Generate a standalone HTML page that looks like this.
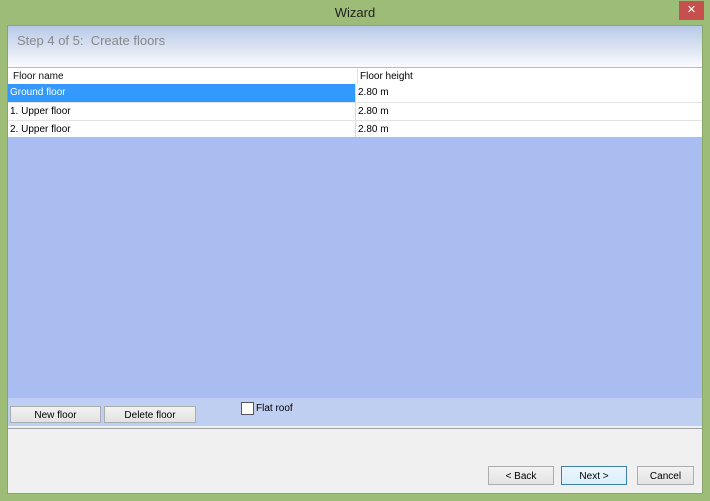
<!DOCTYPE html><html><head><style>
body{margin:0;width:710px;height:501px;background:#9dbc78;font-family:"Liberation Sans",sans-serif;position:relative;overflow:hidden}
.a{position:absolute}
.btn{position:absolute;background:linear-gradient(#f2f2f2,#e3e3e3);border:1px solid #adadad;font-size:10px;text-align:center;box-sizing:border-box;color:#000}
.cell{position:absolute;font-size:10px;line-height:17px;padding-left:2px;box-sizing:border-box}
</style></head><body>
<div class="a" style="left:0;top:0;width:710px;height:25px;text-align:center;font-size:13px;line-height:25px;color:#222">Wizard</div>
<div class="a" style="left:679px;top:1px;width:25px;height:19px;background:#c7504f;color:#fff;text-align:center;font-size:11px;line-height:19px">✕</div>
<div class="a" style="left:7px;top:25px;width:696px;height:469px;background:#f0f0f0;border:1px solid #86a86a;box-sizing:border-box"></div>
<div class="a" style="left:8px;top:26px;width:694px;height:41px;background:linear-gradient(#b8c9e6,#fafbfd);"></div>
<div class="a" style="left:17px;top:33px;font-size:13px;color:#888">Step 4 of 5:&nbsp; Create floors</div>
<div class="a" style="left:8px;top:67px;width:694px;height:70px;background:#fff;border-top:1px solid #bbb"></div>
<div class="cell" style="left:10px;top:68px;width:345px;height:16px;color:#111;padding-left:3px">Floor name</div>
<div class="cell" style="left:357px;top:68px;width:345px;height:16px;border-left:1px solid #e5e5e5">Floor height</div>
<div class="cell" style="left:8px;top:84px;width:347px;height:18px;background:#3399ff;color:#fff">Ground floor</div>
<div class="cell" style="left:355px;top:84px;width:347px;height:18px;border-left:1px solid #ddd">2.80 m</div>
<div class="cell" style="left:8px;top:102px;width:347px;height:18px;border-top:1px solid #e3e3e3">1. Upper floor</div>
<div class="cell" style="left:355px;top:102px;width:347px;height:18px;border-top:1px solid #e3e3e3;border-left:1px solid #ddd">2.80 m</div>
<div class="cell" style="left:8px;top:120px;width:347px;height:17px;border-top:1px solid #e3e3e3">2. Upper floor</div>
<div class="cell" style="left:355px;top:120px;width:347px;height:17px;border-top:1px solid #e3e3e3;border-left:1px solid #ddd">2.80 m</div>
<div class="a" style="left:8px;top:137px;width:694px;height:261px;background:#aabdf1"></div>
<div class="a" style="left:8px;top:398px;width:694px;height:28px;background:#bfcff1"></div>
<div class="a" style="left:8px;top:428px;width:694px;height:1px;background:#a0a0a0"></div>
<div class="btn" style="left:10px;top:406px;width:91px;height:17px;line-height:17px">New floor</div>
<div class="btn" style="left:104px;top:406px;width:92px;height:17px;line-height:17px">Delete floor</div>
<div class="a" style="left:241px;top:402px;width:11px;height:11px;background:#fff;border:1px solid #555"></div>
<div class="a" style="left:256px;top:403px;font-size:10px">Flat roof</div>
<div class="btn" style="left:488px;top:466px;width:66px;height:19px;line-height:19px">&lt; Back</div>
<div class="btn" style="left:561px;top:466px;width:66px;height:19px;line-height:19px;border-color:#3c7fb1;background:linear-gradient(#eaf6fd,#d9f0fc)">Next &gt;</div>
<div class="btn" style="left:637px;top:466px;width:57px;height:19px;line-height:19px">Cancel</div>
</body></html>
